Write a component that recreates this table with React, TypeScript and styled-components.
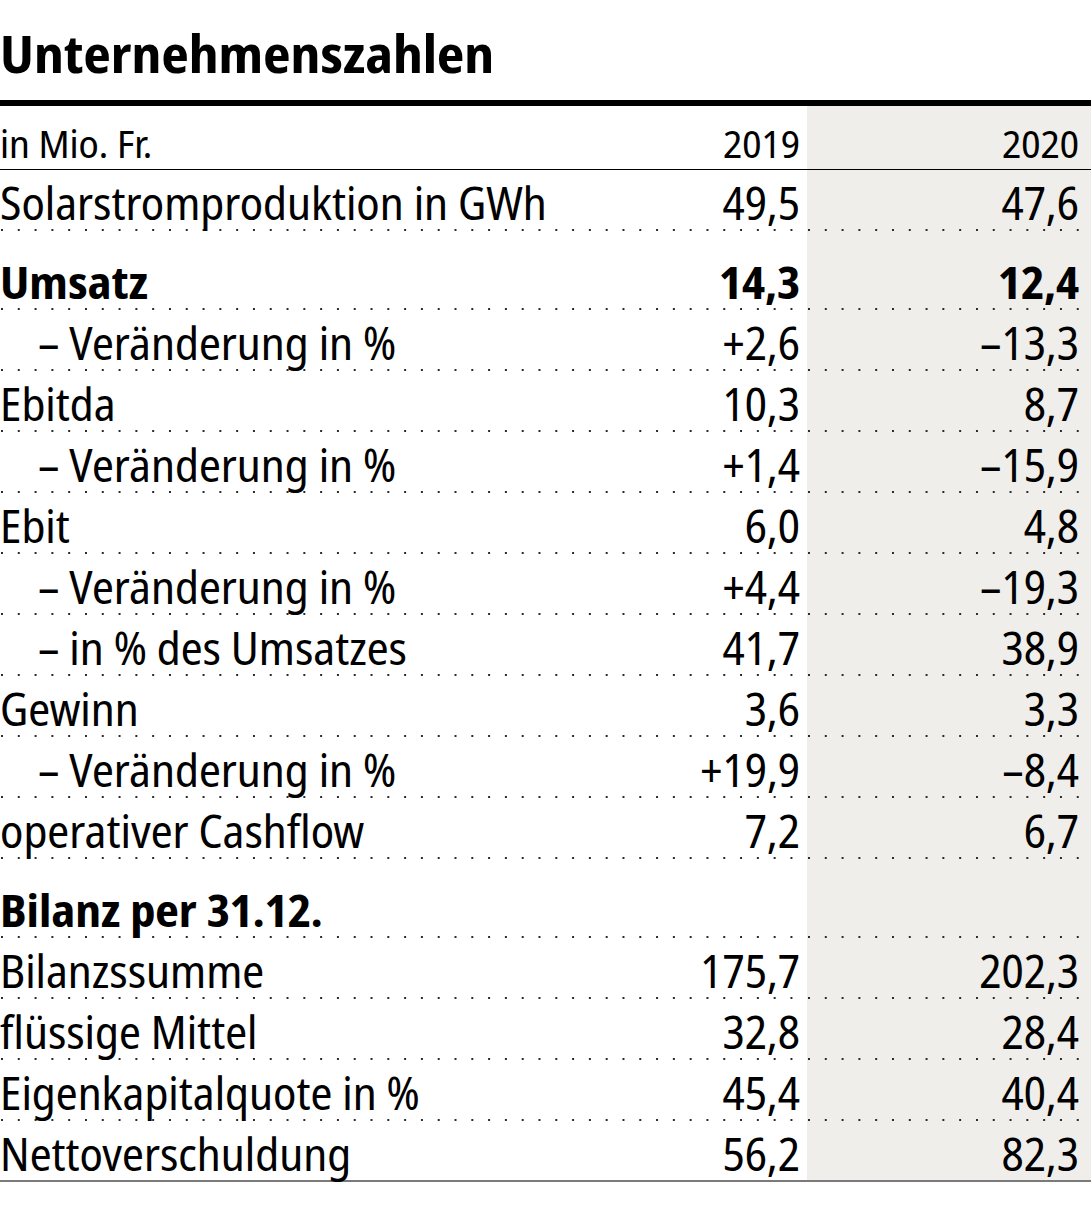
import styled, { createGlobalStyle, css } from 'styled-components';

const GlobalStyle = createGlobalStyle`
  body {
    margin: 0;
    background: #fff;
    color: #000;
    font-family: "Noto Sans Display", "Open Sans", sans-serif;
    font-stretch: semi-condensed;
  }
`;

type RowKind = 'header' | 'normal' | 'section' | 'last';

const dots = css`
  background-image: linear-gradient(to right, #2a2a2a 2px, transparent 2px);
  background-size: 16.8px 2px;
  background-repeat: repeat-x;
  background-position: 1px 100%;
`;

const Page = styled.div`
  width: 1091px;
`;

const Title = styled.h1`
  margin: 0;
  height: 106px;
  box-sizing: border-box;
  display: flex;
  align-items: flex-end;
  padding-bottom: 21px;
  font-size: 52px;
  line-height: 52px;
  font-weight: 700;
  font-stretch: semi-condensed;
  border-bottom: 6px solid #000;
`;

const Table = styled.div`
  display: flex;
  flex-direction: column;
`;

const Row = styled.div<{ $kind: RowKind }>`
  display: grid;
  grid-template-columns: 1fr 200px 284px;
  box-sizing: border-box;
  font-size: 45px;
  line-height: 45px;
  ${(p) => p.$kind === 'header' && css`
    height: 64px;
    font-size: 39px;
    line-height: 39px;
    border-bottom: 1px solid #000;
  `}
  ${(p) => p.$kind === 'normal' && css`
    height: 61px;
    ${dots}
  `}
  ${(p) => p.$kind === 'section' && css`
    height: 79px;
    font-weight: 700;
    ${dots}
  `}
  ${(p) => p.$kind === 'last' && css`
    height: 61px;
    border-bottom: 2px solid #7a7a7a;
  `}
`;

const Cell = styled.div<{ $kind: RowKind }>`
  display: flex;
  align-items: flex-end;
  white-space: nowrap;
  padding-bottom: ${(p) => (p.$kind === 'header' ? '7px' : p.$kind === 'last' ? '4px' : '6px')};
`;

const Label = styled(Cell)<{ $indent?: boolean }>`
  padding-left: ${(p) => (p.$indent ? '38px' : '0')};
`;

const Value = styled(Cell)`
  justify-content: flex-end;
  padding-right: 7px;
`;

const ShadedValue = styled(Value)`
  padding-right: 12px;
  background-color: #efeeea;
  ${(p) => (p.$kind === 'normal' || p.$kind === 'section') && dots}
`;

type Line = {
  label: string;
  a?: string;
  b?: string;
  kind?: RowKind;
  indent?: boolean;
};

const lines: Line[] = [
  { label: 'Solarstromproduktion in GWh', a: '49,5', b: '47,6' },
  { label: 'Umsatz', a: '14,3', b: '12,4', kind: 'section' },
  { label: '– Veränderung in %', a: '+2,6', b: '–13,3', indent: true },
  { label: 'Ebitda', a: '10,3', b: '8,7' },
  { label: '– Veränderung in %', a: '+1,4', b: '–15,9', indent: true },
  { label: 'Ebit', a: '6,0', b: '4,8' },
  { label: '– Veränderung in %', a: '+4,4', b: '–19,3', indent: true },
  { label: '– in % des Umsatzes', a: '41,7', b: '38,9', indent: true },
  { label: 'Gewinn', a: '3,6', b: '3,3' },
  { label: '– Veränderung in %', a: '+19,9', b: '–8,4', indent: true },
  { label: 'operativer Cashflow', a: '7,2', b: '6,7' },
  { label: 'Bilanz per 31.12.', kind: 'section' },
  { label: 'Bilanzssumme', a: '175,7', b: '202,3' },
  { label: 'flüssige Mittel', a: '32,8', b: '28,4' },
  { label: 'Eigenkapitalquote in %', a: '45,4', b: '40,4' },
  { label: 'Nettoverschuldung', a: '56,2', b: '82,3', kind: 'last' },
];

export default function App() {
  return (
    <Page>
      <GlobalStyle />
      <Title>Unternehmenszahlen</Title>
      <Table>
        <Row $kind="header">
          <Label $kind="header">in Mio. Fr.</Label>
          <Value $kind="header">2019</Value>
          <ShadedValue $kind="header">2020</ShadedValue>
        </Row>
        {lines.map((l, i) => {
          const kind = l.kind ?? 'normal';
          return (
            <Row key={i} $kind={kind}>
              <Label $kind={kind} $indent={l.indent}>{l.label}</Label>
              <Value $kind={kind}>{l.a}</Value>
              <ShadedValue $kind={kind}>{l.b}</ShadedValue>
            </Row>
          );
        })}
      </Table>
    </Page>
  );
}
